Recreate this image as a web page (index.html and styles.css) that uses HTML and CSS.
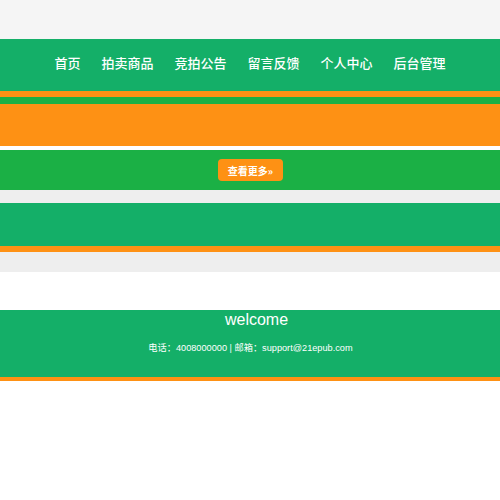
FILE: index.html
```html
<!DOCTYPE html>
<html lang="zh">
<head>
<meta charset="utf-8">
<title>拍卖</title>
<link rel="stylesheet" href="styles.css">
</head>
<body>
<div class="topbar"></div>
<nav class="nav">
  <a class="nav-item">首页</a>
  <a class="nav-item">拍卖商品</a>
  <a class="nav-item">竞拍公告</a>
  <a class="nav-item">留言反馈</a>
  <a class="nav-item">个人中心</a>
  <a class="nav-item">后台管理</a>
</nav>
<div class="stripe-orange"></div>
<div class="stripe-green"></div>
<div class="banner"></div>
<div class="spacer-white"></div>
<div class="more-band">
  <a class="more-btn">查看更多»</a>
</div>
<div class="spacer-gray"></div>
<div class="green-block"></div>
<div class="stripe-orange"></div>
<div class="spacer-gray2"></div>
<div class="spacer-white2"></div>
<footer class="footer">
  <div class="welcome">welcome</div>
  <div class="contact">电话：4008000000 | 邮箱：support@21epub.com</div>
</footer>
</body>
</html>
```
FILE: styles.css
```css
html, body {
  margin: 0;
  padding: 0;
  background: #ffffff;
  font-family: "Liberation Sans", "Noto Sans CJK SC", sans-serif;
}
.topbar {
  height: 39px;
  background: #f5f5f5;
}
.nav {
  height: 52px;
  background: #14af68;
  display: flex;
  justify-content: center;
  align-items: center;
}
.nav-item {
  color: #ffffff;
  font-family: "Noto Sans CJK SC", sans-serif;
  font-size: 13px;
  font-weight: 500;
  padding: 0 10.5px;
  line-height: 16px;
  margin-top: -4px;
}
.stripe-orange {
  height: 6px;
  background: #fe9114;
}
.stripe-green {
  height: 7px;
  background: #1bb045;
}
.banner {
  height: 42px;
  background: #fe9114;
}
.spacer-white {
  height: 4px;
}
.more-band {
  height: 40px;
  background: #1bb045;
  display: flex;
  justify-content: center;
  align-items: center;
}
.more-btn {
  width: 65px;
  height: 22px;
  box-sizing: border-box;
  background: #fe9114;
  border-radius: 4px;
  color: #ffffff;
  font-family: "Noto Sans CJK SC", sans-serif;
  font-weight: bold;
  font-size: 10px;
  display: flex;
  align-items: center;
  justify-content: center;
  margin-left: 1px;
}
.spacer-gray {
  height: 13px;
  background: #eeeeee;
}
.green-block {
  height: 43px;
  background: #14af68;
}
.spacer-gray2 {
  height: 20px;
  background: #eeeeee;
}
.spacer-white2 {
  height: 38px;
}
.footer {
  height: 67px;
  background: #14af68;
  border-bottom: 4px solid #fe9114;
  color: #ffffff;
  text-align: center;
}
.welcome {
  font-size: 16px;
  line-height: 20px;
  padding-left: 13px;
}
.contact {
  font-size: 9.2px;
  margin-top: 12px;
  line-height: 12px;
  padding-left: 1px;
}
```
